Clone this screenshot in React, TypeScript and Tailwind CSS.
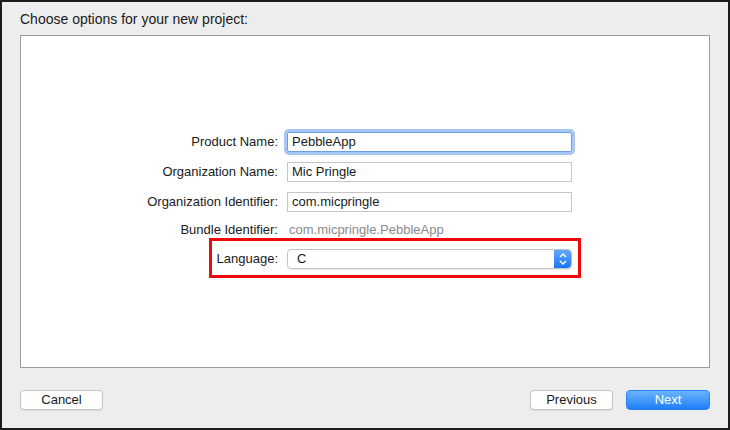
import React from "react";

const font = { fontFamily: '"Liberation Sans", Arial, sans-serif' };

function Stepper() {
  return (
    <div className="flex h-full w-[17px] flex-col items-center justify-center gap-[2px] rounded-r-[4px] bg-gradient-to-b from-[#62a8fb] to-[#1a74f5]">
      <svg width="8" height="5" viewBox="0 0 8 5">
        <path d="M1 4 L4 1 L7 4" stroke="white" strokeWidth="1.4" fill="none" />
      </svg>
      <svg width="8" height="5" viewBox="0 0 8 5">
        <path d="M1 1 L4 4 L7 1" stroke="white" strokeWidth="1.4" fill="none" />
      </svg>
    </div>
  );
}

export default function App() {
  return (
    <div
      style={font}
      className="box-border flex h-[430px] w-[730px] flex-col border-2 border-[#1c1c1c] bg-[#ededed] text-[13px] text-[#1a1a1a]"
    >
      <div className="pl-[18px] pt-[9px] text-[14px] leading-[16px]">Choose options for your new project:</div>
      <div className="ml-[18px] mt-[8px] h-[333px] w-[690px] border border-[#9b9b9b] bg-white pl-[109px] pt-[96px]">
        <div className="flex flex-col">
          <div className="flex h-[20px] items-center">
            <div className="w-[148px] text-right">Product Name:</div>
            <div className="ml-[9px] flex h-[20px] w-[285px] items-center rounded-[2px] border border-[#6e9fe3] pl-[4px] shadow-[0_0_0_3px_#a6c6f3]">
              PebbleApp
            </div>
          </div>
          <div className="mt-[10px] flex h-[20px] items-center">
            <div className="w-[148px] text-right">Organization Name:</div>
            <div className="ml-[9px] flex h-[20px] w-[285px] items-center border border-[#c6c6c6] pl-[4px]">
              Mic Pringle
            </div>
          </div>
          <div className="mt-[10px] flex h-[20px] items-center">
            <div className="w-[148px] text-right">Organization Identifier:</div>
            <div className="ml-[9px] flex h-[20px] w-[285px] items-center border border-[#c6c6c6] pl-[4px]">
              com.micpringle
            </div>
          </div>
          <div className="mt-[8px] flex h-[20px] items-center">
            <div className="w-[148px] text-right">Bundle Identifier:</div>
            <div className="ml-[9px] w-[285px] pl-[2px] text-[#8a8a8a]">com.micpringle.PebbleApp</div>
          </div>
          <div className="relative mt-[9px] flex h-[20px] items-center">
            <div className="w-[148px] text-right">Language:</div>
            <div className="ml-[9px] flex h-[20px] w-[285px] items-center justify-between rounded-[4px] border border-[#c4c4c4] bg-white shadow-[0_1px_1px_rgba(0,0,0,0.08)]">
              <span className="pl-[9px]">C</span>
              <Stepper />
            </div>
            <div className="pointer-events-none absolute bottom-[-9px] left-[79px] top-[-11px] w-[372px] border-[3px] border-[#ee0a0a]" />
          </div>
        </div>
      </div>
      <div className="mt-[22px] flex items-center justify-between pl-[18px] pr-[18px]">
        <div className="flex h-[20px] w-[83px] items-center justify-center rounded-[4px] border border-[#c4c4c4] bg-white shadow-[0_1px_1px_rgba(0,0,0,0.08)]">
          Cancel
        </div>
        <div className="flex items-center gap-[13px]">
          <div className="flex h-[20px] w-[83px] items-center justify-center rounded-[4px] border border-[#c4c4c4] bg-white shadow-[0_1px_1px_rgba(0,0,0,0.08)]">
            Previous
          </div>
          <div className="flex h-[20px] w-[84px] items-center justify-center rounded-[4px] border border-[#2a7ff5] bg-gradient-to-b from-[#6ab3fb] to-[#1a7ef8] text-white">
            Next
          </div>
        </div>
      </div>
    </div>
  );
}
